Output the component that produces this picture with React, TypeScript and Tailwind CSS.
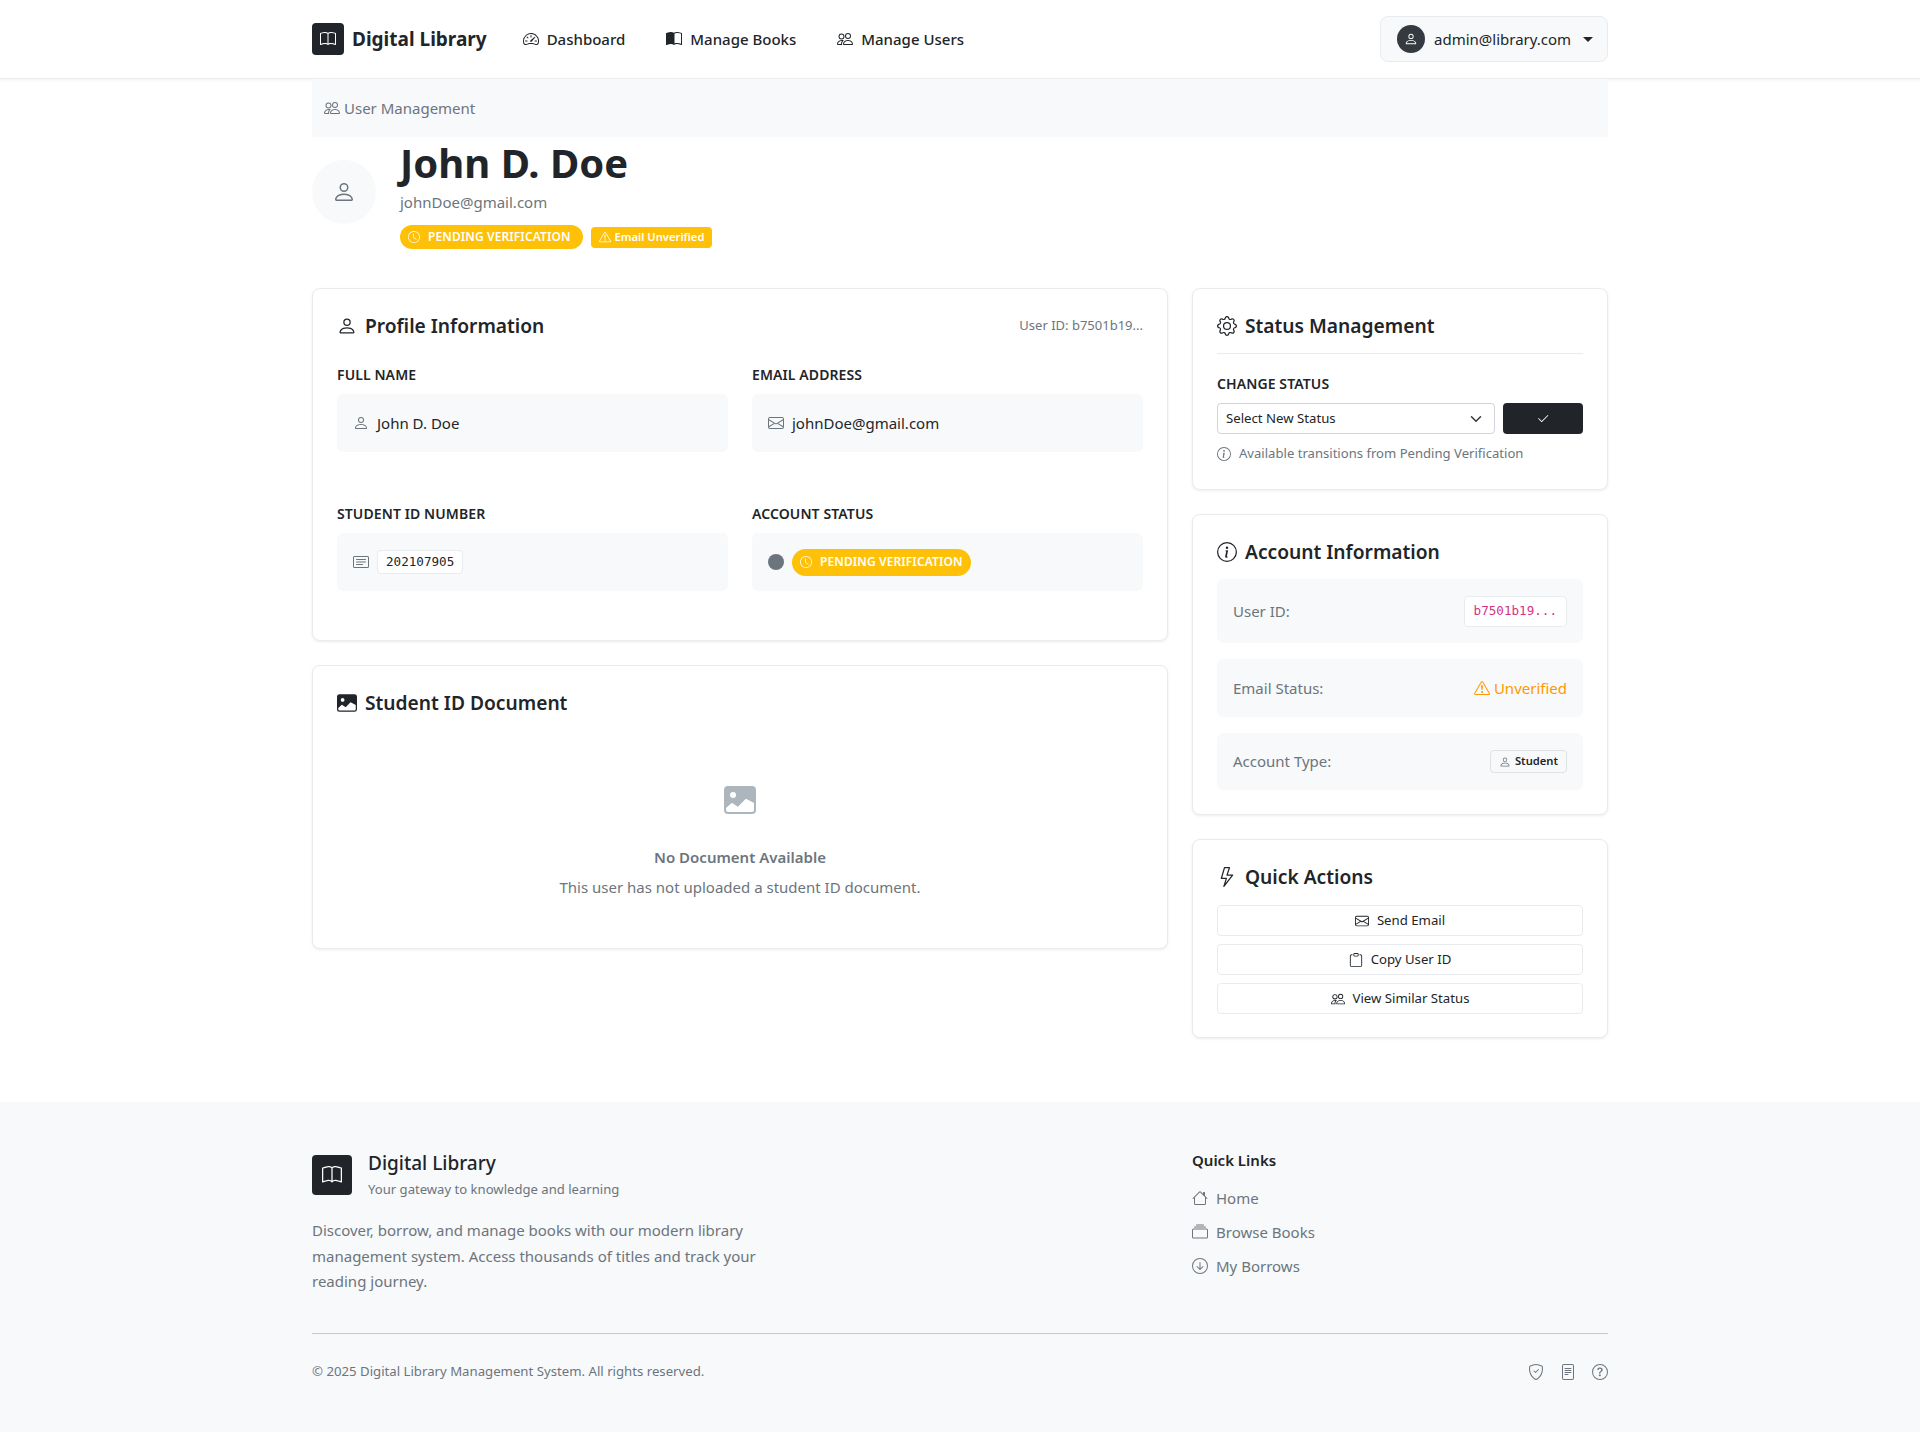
import type { ReactNode } from "react";
import {
  BsArrowDownCircle,
  BsBook,
  BsBookHalf,
  BsCardText,
  BsCheck2,
  BsClipboard,
  BsClock,
  BsCollection,
  BsEnvelope,
  BsExclamationTriangle,
  BsFileText,
  BsGear,
  BsHouse,
  BsImageFill,
  BsInfoCircle,
  BsLightning,
  BsPeople,
  BsPerson,
  BsQuestionCircle,
  BsShieldCheck,
  BsSpeedometer2,
} from "react-icons/bs";

function Card({ className, children }: { className: string; children: ReactNode }) {
  return (
    <div className={`rounded-lg border border-[#e9ecef] bg-white shadow-[0_1px_3px_rgba(0,0,0,0.08)] ${className}`}>
      {children}
    </div>
  );
}

function PendingBadge({ className }: { className: string }) {
  return (
    <span className={`flex items-center rounded-full bg-[#ffc107] pl-2 text-[12px] font-semibold tracking-[0.1px] text-white ${className}`}>
      <BsClock className="mr-[8px] text-[12px]" />
      PENDING VERIFICATION
    </span>
  );
}

function Label({ children }: { children: ReactNode }) {
  return <div className="text-[14px] leading-[20px] font-semibold tracking-[0.1px] text-[#212529] uppercase">{children}</div>;
}

function Field({ label, top, children }: { label: string; top: string; children: ReactNode }) {
  return (
    <div className={top}>
      <Label>{label}</Label>
      <div className="mt-[9px] flex h-[58px] items-center rounded-md bg-[#f8f9fa] px-4 text-[15px] text-[#212529]">
        {children}
      </div>
    </div>
  );
}

function Title({ icon, children }: { icon: ReactNode; children: ReactNode }) {
  return (
    <div className="-mt-px flex h-[28px] items-center">
      {icon}
      <h2 className="text-[19.2px] font-semibold">{children}</h2>
    </div>
  );
}

function ActionButton({ icon, children }: { icon: ReactNode; children: ReactNode }) {
  return (
    <div className="flex h-[31px] items-center justify-center gap-2 rounded border border-[#e9ecef] bg-white text-[13.2px] text-[#212529]">
      {icon}
      {children}
    </div>
  );
}

function FooterLink({ icon, children }: { icon: ReactNode; children: ReactNode }) {
  return (
    <div className="flex h-[34px] items-center gap-2 text-[15px] text-[#6c757d]">
      {icon}
      {children}
    </div>
  );
}

export default function App() {
  return (
    <div className="min-h-[1432px] bg-white font-['Noto_Sans','Open_Sans',sans-serif] text-[#212529]">
      {/* Navbar */}
      <nav className="h-[79px] border-b border-[#e9ecef] bg-white shadow-[0_1px_3px_rgba(0,0,0,0.06)]">
        <div className="mx-auto flex h-full w-[1296px] items-center">
          <div className="flex h-8 w-8 items-center justify-center rounded bg-[#212529] text-white">
            <BsBook className="text-[16px]" />
          </div>
          <span className="mt-px ml-2 text-[19px] font-bold">Digital Library</span>
          <div className="ml-9 flex items-center gap-[41px] text-[15px] font-medium">
            <span className="flex items-center gap-2"><BsSpeedometer2 className="text-[16px]" />Dashboard</span>
            <span className="flex items-center gap-2"><BsBookHalf className="text-[16px]" />Manage Books</span>
            <span className="flex items-center gap-2"><BsPeople className="text-[16px]" />Manage Users</span>
          </div>
          <div className="ml-auto flex h-[46px] w-[228px] items-center rounded-lg border border-[#e9ecef] bg-[#f8f9fa] pl-4">
            <span className="flex h-7 w-7 items-center justify-center rounded-full bg-[#343a40] text-white">
              <BsPerson className="text-[14px]" />
            </span>
            <span className="ml-[9px] text-[15px]">admin@library.com</span>
            <span className="ml-3 h-0 w-0 border-x-[5px] border-t-[5px] border-x-transparent border-t-[#212529]" />
          </div>
        </div>
      </nav>

      <main className="mx-auto w-[1296px]">
        {/* Breadcrumb */}
        <div className="flex h-[58px] items-center gap-1 bg-[#f8f9fa] px-3 text-[15px] text-[#6c757d]">
          <BsPeople className="text-[16px]" />
          User Management
        </div>

        {/* Header */}
        <div className="flex items-center gap-6 pb-[39px]">
          <div className="mb-[2px] flex h-16 w-16 items-center justify-center rounded-full bg-[#f8f9fa] text-[24px] text-[#6c757d]">
            <BsPerson />
          </div>
          <div className="pt-[2px]">
            <h1 className="text-[40px] leading-[48px] font-bold">John D. Doe</h1>
            <div className="mt-[3px] text-[15px] leading-[24px] text-[#6c757d]">johnDoe@gmail.com</div>
            <div className="mt-[11px] flex items-center gap-2">
              <PendingBadge className="h-6 pr-3" />
              <span className="flex h-[21px] items-center rounded bg-[#ffc107] px-2 text-[11.2px] font-semibold text-white">
                <BsExclamationTriangle className="mr-1 text-[12px]" />
                Email Unverified
              </span>
            </div>
          </div>
        </div>

        <div className="grid grid-cols-[856px_416px] gap-x-6">
          {/* Left column */}
          <div className="flex flex-col gap-6">
            <Card className="h-[353px] p-6">
              <div className="-mt-px flex h-[28px] items-center">
                <BsPerson className="mr-2 text-[20px]" />
                <h2 className="text-[19.2px] font-semibold">Profile Information</h2>
                <span className="ml-auto text-[13px] text-[#6c757d]">User ID: b7501b19...</span>
              </div>
              <div className="mt-[24px] grid grid-cols-2 gap-x-6">
                <Field label="Full Name" top="mt-[1px]">
                  <BsPerson className="mr-2 text-[16px] text-[#6c757d]" />
                  John D. Doe
                </Field>
                <Field label="Email Address" top="mt-[1px]">
                  <BsEnvelope className="mr-[8px] text-[16px] text-[#6c757d]" />
                  johnDoe@gmail.com
                </Field>
                <Field label="Student ID Number" top="mt-[52px]">
                  <BsCardText className="mr-2 text-[16px] text-[#6c757d]" />
                  <code className="flex h-[24px] items-center rounded border border-[#e9ecef] bg-white px-2 font-['DejaVu_Sans_Mono',monospace] text-[12.6px]">
                    202107905
                  </code>
                </Field>
                <Field label="Account Status" top="mt-[52px]">
                  <span className="mr-[8px] h-4 w-4 rounded-full bg-[#6c757d]" />
                  <PendingBadge className="h-[27px] pr-2" />
                </Field>
              </div>
            </Card>

            <Card className="h-[284px] p-6">
              <Title icon={<BsImageFill className="mr-2 text-[20px]" />}>Student ID Document</Title>
              <div className="mt-[67px] flex flex-col items-center text-center">
                <BsImageFill className="text-[32px] text-[#adb5bd]" />
                <div className="mt-[29px] text-[15px] leading-[24px] font-semibold text-[#6c757d]">No Document Available</div>
                <div className="mt-[6px] text-[15px] leading-[24px] text-[#6c757d]">This user has not uploaded a student ID document.</div>
              </div>
            </Card>
          </div>

          {/* Right column */}
          <div className="flex flex-col gap-6">
            <Card className="h-[202px] px-6 pt-6">
              <Title icon={<BsGear className="mr-2 text-[20px]" />}>Status Management</Title>
              <div className="mt-[13px] border-t border-[#e9ecef] pt-[20px]">
                <Label>Change Status</Label>
                <div className="mt-[9px] flex gap-2">
                  <div className="flex h-[31px] flex-1 items-center justify-between rounded border border-[#ced4da] bg-white pl-2 pr-3 text-[13.2px]">
                    Select New Status
                    <svg className="h-3 w-3" viewBox="0 0 16 16" fill="none" stroke="#343a40" strokeWidth="2" strokeLinecap="round" strokeLinejoin="round">
                      <path d="m2 5 6 6 6-6" />
                    </svg>
                  </div>
                  <div className="flex h-[31px] w-[80px] items-center justify-center rounded bg-[#212529] text-white">
                    <BsCheck2 className="text-[14px]" />
                  </div>
                </div>
                <div className="mt-[10px] flex items-center gap-2 text-[13.1px] text-[#6c757d]">
                  <BsInfoCircle className="text-[14px]" />
                  Available transitions from Pending Verification
                </div>
              </div>
            </Card>

            <Card className="h-[301px] px-6 pt-[24px]">
              <Title icon={<BsInfoCircle className="mr-2 text-[20px]" />}>Account Information</Title>
              <div className="mt-[13px] flex flex-col gap-4 text-[15px] text-[#6c757d]">
                <div className="flex h-[64px] items-center justify-between rounded-md bg-[#f8f9fa] px-4">
                  User ID:
                  <code className="flex h-[31px] items-center rounded border border-[#e9ecef] bg-white px-[9px] font-['DejaVu_Sans_Mono',monospace] text-[12.6px] text-[#d63384]">
                    b7501b19...
                  </code>
                </div>
                <div className="flex h-[58px] items-center justify-between rounded-md bg-[#f8f9fa] px-4">
                  Email Status:
                  <span className="flex items-center gap-1 text-[#ff9800]">
                    <BsExclamationTriangle className="text-[16px]" />
                    Unverified
                  </span>
                </div>
                <div className="flex h-[57px] items-center justify-between rounded-md bg-[#f8f9fa] px-4">
                  Account Type:
                  <span className="flex h-[23px] items-center gap-1 rounded border border-[#dee2e6] bg-[#f8f9fa] px-2 text-[11.2px] font-semibold text-[#212529]">
                    <BsPerson className="text-[12px] text-[#6c757d]" />
                    Student
                  </span>
                </div>
              </div>
            </Card>

            <Card className="h-[199px] px-6 pt-[24px]">
              <Title icon={<BsLightning className="mr-2 text-[20px]" />}>Quick Actions</Title>
              <div className="mt-[14px] flex flex-col gap-2">
                <ActionButton icon={<BsEnvelope className="text-[14px]" />}>Send Email</ActionButton>
                <ActionButton icon={<BsClipboard className="text-[14px]" />}>Copy User ID</ActionButton>
                <ActionButton icon={<BsPeople className="text-[14px]" />}>View Similar Status</ActionButton>
              </div>
            </Card>
          </div>
        </div>
      </main>

      {/* Footer */}
      <footer className="mt-[64px] h-[330px] bg-[#f8f9fa]">
        <div className="mx-auto w-[1296px] pt-[47px]">
          <div className="flex h-[184px]">
            <div className="w-[880px]">
              <div className="flex">
                <div className="mt-[6px] flex h-10 w-10 items-center justify-center rounded bg-[#212529] text-white">
                  <BsBook className="text-[20px]" />
                </div>
                <div className="ml-4">
                  <div className="text-[19px] leading-[28px] font-medium">Digital Library</div>
                  <div className="mt-[2px] text-[13.1px] leading-[20px] text-[#6c757d]">Your gateway to knowledge and learning</div>
                </div>
              </div>
              <p className="mt-[19px] w-[460px] text-[15px] leading-[25.6px] text-[#6c757d]">
                Discover, borrow, and manage books with our modern library management system. Access thousands of titles and track your reading journey.
              </p>
            </div>
            <div>
              <div className="-mt-px text-[15px] leading-[24px] font-semibold">Quick Links</div>
              <div className="mt-[9px]">
                <FooterLink icon={<BsHouse className="text-[16px]" />}>Home</FooterLink>
                <FooterLink icon={<BsCollection className="text-[16px]" />}>Browse Books</FooterLink>
                <FooterLink icon={<BsArrowDownCircle className="text-[16px]" />}>My Borrows</FooterLink>
              </div>
            </div>
          </div>
          <div className="flex h-[76px] items-center justify-between border-t border-[#c6c9cc] text-[13.2px] text-[#6c757d]">
            © 2025 Digital Library Management System. All rights reserved.
            <div className="flex items-center gap-4 text-[16px]">
              <BsShieldCheck />
              <BsFileText />
              <BsQuestionCircle />
            </div>
          </div>
        </div>
      </footer>
    </div>
  );
}
